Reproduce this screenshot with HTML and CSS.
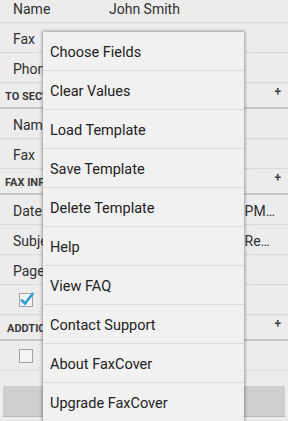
FILE: index.html
```html
<!DOCTYPE html>
<html>
<head>
<meta charset="utf-8">
<link rel="stylesheet" href="styles.css">
</head>
<body>
<div class="screen">
  <div class="list">
    <div class="row"><span class="label">Name</span><span class="value">John Smith</span></div>
    <div class="row"><span class="label">Fax</span><span class="value"></span></div>
    <div class="row"><span class="label">Phone</span><span class="value"></span></div>
    <div class="header"><span class="htext">TO SECTION</span><span class="plus">+</span></div>
    <div class="row"><span class="label">Name</span><span class="value"></span></div>
    <div class="row"><span class="label">Fax</span><span class="value"></span></div>
    <div class="header"><span class="htext">FAX INFO</span><span class="plus">+</span></div>
    <div class="row"><span class="label">Date</span><span class="value right"><span>Thu, Jun 13, 2013 4:05 PM…</span></span></div>
    <div class="row"><span class="label">Subject</span><span class="value right pad5"><span>Quarterly Report Re…</span></span></div>
    <div class="row"><span class="label">Pages</span><span class="value"></span></div>
    <div class="row checkrow">
      <svg class="cb" width="16" height="16" viewBox="0 0 16 16">
        <rect x="0.5" y="2.5" width="13" height="13" fill="#f4f4f4" stroke="#a3a3a3"/>
        <path d="M3 9.5 L6 12.5 L13.5 3" fill="none" stroke="#2e9fd3" stroke-width="2.6" stroke-linecap="square"/>
      </svg>
    </div>
    <div class="header"><span class="htext hsmall">ADDTIONAL</span><span class="plus">+</span></div>
    <div class="row checkrow last">
      <svg class="cb" width="16" height="16" viewBox="0 0 16 16">
        <rect x="0.5" y="2.5" width="13" height="13" fill="#f4f4f4" stroke="#a3a3a3"/>
      </svg>
    </div>
    <div class="btn">Create Fax</div>
  </div>

  <div class="menu">
    <div class="item">Choose Fields</div>
    <div class="item">Clear Values</div>
    <div class="item">Load Template</div>
    <div class="item">Save Template</div>
    <div class="item">Delete Template</div>
    <div class="item">Help</div>
    <div class="item">View FAQ</div>
    <div class="item">Contact Support</div>
    <div class="item">About FaxCover</div>
    <div class="item">Upgrade FaxCover</div>
  </div>
</div>
</body>
</html>
```

FILE: styles.css
```css
* { box-sizing: border-box; }
html, body {
  margin: 0;
  padding: 0;
  width: 288px;
  height: 421px;
  overflow: hidden;
  background: #ececec;
  font-family: Roboto, "Noto Sans", sans-serif;
}
.screen {
  position: relative;
  width: 288px;
  height: 421px;
  overflow: hidden;
}
.list {
  margin-top: -7px;
}
.row {
  display: flex;
  align-items: center;
  height: 30px;
  border-bottom: 1px solid #d9d9d9;
  padding-left: 13px;
  padding-top: 3px;
  font-size: 14px;
  color: #303030;
}
.label {
  width: 96px;
  flex-shrink: 0;
  white-space: nowrap;
}
.value {
  flex: 1;
  white-space: nowrap;
  overflow: hidden;
  margin-right: 13px;
}
.value.right {
  display: flex;
  justify-content: flex-end;
}
.value.right > span {
  flex-shrink: 0;
}
.value.pad5 { padding-right: 5px; }
.header {
  display: flex;
  align-items: flex-end;
  justify-content: space-between;
  height: 26px;
  border-bottom: 2px solid #c6c6c6;
  padding: 0 7px 4px 5px;
}
.htext {
  font-size: 11px;
  font-weight: bold;
  color: #3a3a3a;
}
.hsmall { padding-left: 2px; }
.plus {
  font-size: 12px;
  font-weight: bold;
  color: #444;
  line-height: 12px;
  margin-bottom: 5px;
}
.checkrow {
  padding-left: 19px;
  padding-top: 0;
}
.checkrow .cb {
  margin-top: -2px;
}
.row.last { border-bottom: 1px solid #e0e0e0; }
.btn {
  margin: 15px 3px 0 3px;
  height: 31px;
  background: #cecece;
  border-bottom: 1px solid #b9b9b9;
  display: flex;
  align-items: center;
  justify-content: center;
  font-size: 14px;
  color: #303030;
}
.menu {
  position: absolute;
  left: 43px;
  top: 32px;
  width: 201px;
  height: 400px;
  background: #f1f1f1;
  box-shadow: 0 0 3px 1px rgba(0, 0, 0, 0.35);
}
.item {
  height: 39px;
  border-bottom: 1px solid #dcdcdc;
  display: flex;
  align-items: center;
  padding-left: 7px;
  padding-top: 2px;
  font-size: 14.5px;
  color: #222;
  white-space: nowrap;
}
```
